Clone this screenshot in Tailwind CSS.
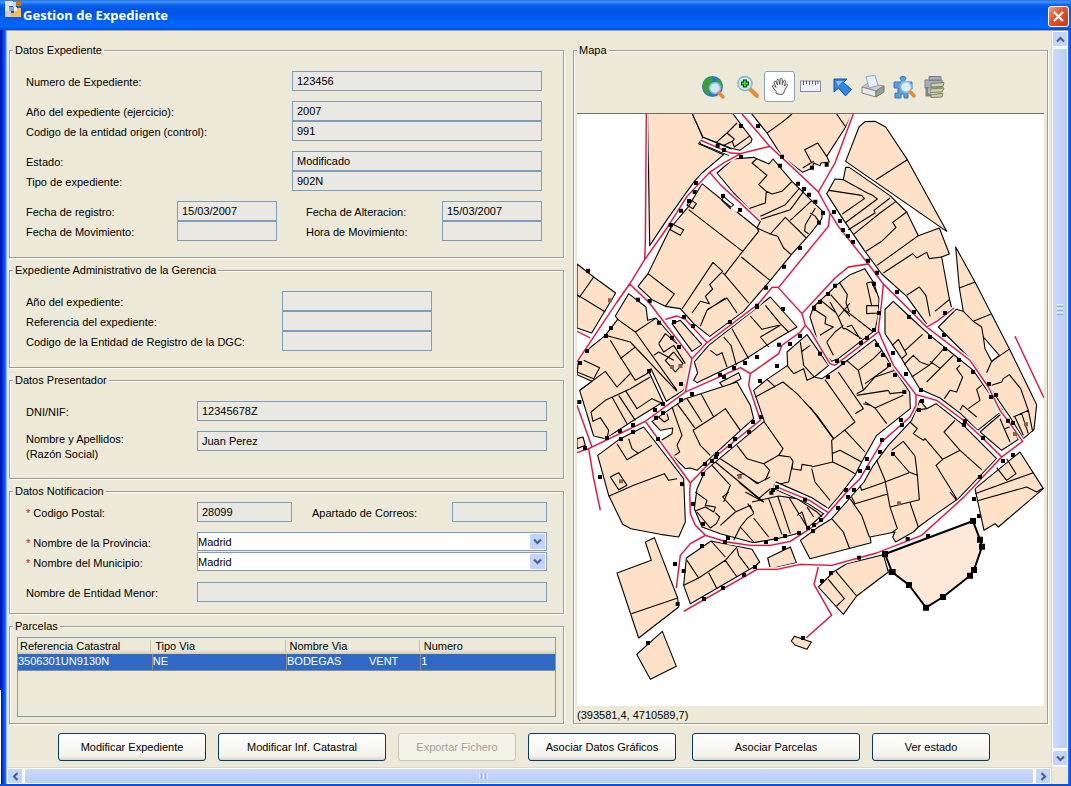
<!DOCTYPE html>
<html lang="es">
<head>
<meta charset="utf-8">
<title>Gestion de Expediente</title>
<script src="https://cdn.jsdelivr.net/npm/@tailwindcss/browser@4"></script>
</head>
<body class="bg-[#ece9d8] font-['Liberation_Sans',Arial,sans-serif] text-[11px] leading-[14px] text-black">
<div class="flex min-h-screen flex-col">
  <header class="flex h-[30px] shrink-0 items-start justify-between bg-[linear-gradient(#2f6fd8_0,#3b93ff_2px,#0a62ee_5px,#0054e3_9px,#0055e6_14px,#0062fb_22px,#0066ff_27px,#0048d0_30px)] pr-[2px] pl-[5px]">
    <div class="flex items-start gap-[2px]">
      <svg class="h-[17px] w-[16px]" viewBox="0 0 16 17" aria-hidden="true"><path fill="#dfe4ee" d="M0 1h8v5H4v5H0z"/><path fill="#8fa3c4" d="M4 7h5v4H4z"/><path fill="#c9d3e6" d="M8 2h3v5H8zM0 11h6v6H0z"/><path fill="#b97a1c" d="M11 1h5v5h-5z"/><path fill="#f8bd57" d="M9 8h7v9H5v-4h4z"/><path fill="#e9edf5" d="M9 7h3v4H9z"/></svg>
      <h1 class="pt-[7px] font-['Noto_Sans',sans-serif] text-[13px] leading-[17px] font-bold text-white">Gestion de Expediente</h1>
    </div>
    <button aria-label="Cerrar" class="mt-[6px] flex size-[21px] items-center justify-center rounded-[3px] border border-white bg-[linear-gradient(135deg,#f0a088,#e0532c_45%,#c63a12)]"><svg class="size-[13px]" viewBox="0 0 13 13"><path d="M2 2l9 9M11 2l-9 9" stroke="#fff" stroke-width="2.2"/></svg></button>
  </header>

  <div class="flex flex-1">
    <div class="relative w-[7px] shrink-0 bg-[linear-gradient(90deg,#0014b4_0,#0018c4_2px,#0046e0_3px,#0a5cf4_5px,#3f86f0_6px,#d8e4f4_7px)]"><span class="absolute bottom-0 left-0 h-[94px] w-px bg-white"></span></div>
    <div class="flex flex-1 flex-col border-t border-[#aca899]">
      <main class="flex flex-1 flex-col pt-[13px] pr-[3px] pb-[6px] pl-[2px]">
        <div class="grid flex-1 grid-cols-[555fr_475fr] gap-[9px]">
          <form class="flex flex-col gap-[6px]">
            <fieldset class="border border-[#9d9d8f] px-4 pt-[15px] pb-4 shadow-[1px_1px_0_#fff,inset_1px_1px_0_#fff]">
              <legend class="ml-[-13px] bg-[#ece9d8] px-[2px] leading-3">Datos Expediente</legend>
              <div class="flex flex-col gap-[10px] pr-[5px]">
                <div class="flex items-center"><label for="num" class="flex-1 pt-px">Numero de Expediente:</label><input id="num" value="123456" readonly class="h-5 w-[250px] border border-[#7f9db9] bg-[#e9e8e2] px-1"></div>
                <div>
                  <div class="flex items-center"><label for="anio" class="flex-1 pt-px">Año del expediente (ejercicio):</label><input id="anio" value="2007" readonly class="h-5 w-[250px] border border-[#7f9db9] bg-[#e9e8e2] px-1"></div>
                  <div class="flex items-center"><label for="ent" class="flex-1 pt-px">Codigo de la entidad origen (control):</label><input id="ent" value="991" readonly class="h-5 w-[250px] border border-[#7f9db9] bg-[#e9e8e2] px-1"></div>
                </div>
                <div>
                  <div class="flex items-center"><label for="est" class="flex-1 pt-px">Estado:</label><input id="est" value="Modificado" readonly class="h-5 w-[250px] border border-[#7f9db9] bg-[#e9e8e2] px-1"></div>
                  <div class="flex items-center"><label for="tipo" class="flex-1 pt-px">Tipo de expediente:</label><input id="tipo" value="902N" readonly class="h-5 w-[250px] border border-[#7f9db9] bg-[#e9e8e2] px-1"></div>
                </div>
                <div>
                  <div class="flex items-center"><label for="freg" class="flex-1 pt-px">Fecha de registro:</label><input id="freg" value="15/03/2007" readonly class="h-5 w-[100px] border border-[#7f9db9] bg-[#e9e8e2] px-1"><label for="falt" class="ml-[29px] w-[136px] pt-px">Fecha de Alteracion:</label><input id="falt" value="15/03/2007" readonly class="h-5 w-[100px] border border-[#7f9db9] bg-[#e9e8e2] px-1"></div>
                  <div class="flex items-center"><label for="fmov" class="flex-1 pt-px">Fecha de Movimiento:</label><input id="fmov" readonly class="h-5 w-[100px] border border-[#7f9db9] bg-[#e9e8e2] px-1"><label for="hmov" class="ml-[29px] w-[136px] pt-px">Hora de Movimiento:</label><input id="hmov" readonly class="h-5 w-[100px] border border-[#7f9db9] bg-[#e9e8e2] px-1"></div>
                </div>
              </div>
            </fieldset>

            <fieldset class="border border-[#9d9d8f] px-4 pt-[15px] pb-4 shadow-[1px_1px_0_#fff,inset_1px_1px_0_#fff]">
              <legend class="ml-[-13px] bg-[#ece9d8] px-[2px] leading-3">Expediente Administrativo de la Gerencia</legend>
              <div class="flex items-center"><label for="ga" class="w-[256px] pt-px">Año del expediente:</label><input id="ga" readonly class="h-5 w-[150px] border border-[#7f9db9] bg-[#e9e8e2] px-1"></div>
              <div class="flex items-center"><label for="gr" class="w-[256px] pt-px">Referencia del expediente:</label><input id="gr" readonly class="h-5 w-[150px] border border-[#7f9db9] bg-[#e9e8e2] px-1"></div>
              <div class="flex items-center"><label for="gc" class="w-[256px] pt-px">Codigo de la Entidad de Registro de la DGC:</label><input id="gc" readonly class="h-5 w-[150px] border border-[#7f9db9] bg-[#e9e8e2] px-1"></div>
            </fieldset>

            <fieldset class="border border-[#9d9d8f] px-4 pt-[15px] pb-[27px] shadow-[1px_1px_0_#fff,inset_1px_1px_0_#fff]">
              <legend class="ml-[-13px] bg-[#ece9d8] px-[2px] leading-3">Datos Presentador</legend>
              <div class="flex flex-col gap-[10px]">
                <div class="flex items-center"><label for="dni" class="w-[171px] pt-px">DNI/NIF:</label><input id="dni" value="12345678Z" readonly class="h-5 flex-1 border border-[#7f9db9] bg-[#e9e8e2] px-1"></div>
                <div class="flex h-5 items-start"><label for="nom" class="w-[171px] pt-px leading-[15px]">Nombre y Apellidos:<br>(Razón Social)</label><input id="nom" value="Juan Perez" readonly class="h-5 flex-1 border border-[#7f9db9] bg-[#e9e8e2] px-1"></div>
              </div>
            </fieldset>

            <fieldset class="border border-[#9d9d8f] px-4 pt-[5px] pb-[11px] shadow-[1px_1px_0_#fff,inset_1px_1px_0_#fff]">
              <legend class="ml-[-13px] bg-[#ece9d8] px-[2px] leading-3">Datos Notificacion</legend>
              <div class="flex flex-col gap-[10px]">
                <div class="flex items-center"><label for="cp" class="w-[171px] pt-px"><span class="text-red-600">*</span> Codigo Postal:</label><input id="cp" value="28099" readonly class="h-5 w-[95px] border border-[#7f9db9] bg-[#e9e8e2] px-1"><label for="ap" class="ml-5 flex-1 pt-px">Apartado de Correos:</label><input id="ap" readonly class="h-5 w-[95px] border border-[#7f9db9] bg-[#e9e8e2] px-1"></div>
                <div class="flex flex-col gap-px pb-px">
                  <div class="flex items-center"><label for="prov" class="w-[171px] pt-[3px]"><span class="text-red-600">*</span> Nombre de la Provincia:</label>
                    <div class="relative flex flex-1"><select id="prov" class="h-[19px] w-full appearance-none border border-[#7f9db9] bg-white"><option>Madrid</option></select><svg class="pointer-events-none absolute top-[2px] right-[2px] size-[15px]" viewBox="0 0 15 15"><rect width="15" height="15" rx="1" fill="#c1d3fb"/><path d="M4 5.500l3.500 3.500L11 5.500" fill="none" stroke="#4d6185" stroke-width="2.200"/></svg></div></div>
                  <div class="flex items-center"><label for="mun" class="w-[171px] pt-[3px]"><span class="text-red-600">*</span> Nombre del Municipio:</label>
                    <div class="relative flex flex-1"><select id="mun" class="h-[19px] w-full appearance-none border border-[#7f9db9] bg-white"><option>Madrid</option></select><svg class="pointer-events-none absolute top-[2px] right-[2px] size-[15px]" viewBox="0 0 15 15"><rect width="15" height="15" rx="1" fill="#c1d3fb"/><path d="M4 5.500l3.500 3.500L11 5.500" fill="none" stroke="#4d6185" stroke-width="2.200"/></svg></div></div>
                </div>
                <div class="flex items-center"><label for="em" class="w-[171px] pt-px">Nombre de Entidad Menor:</label><input id="em" readonly class="h-5 flex-1 border border-[#7f9db9] bg-[#e9e8e2] px-1"></div>
              </div>
            </fieldset>

            <fieldset class="border border-[#9d9d8f] px-[7px] pt-[5px] pb-[6px] shadow-[1px_1px_0_#fff,inset_1px_1px_0_#fff]">
              <legend class="ml-[-4px] bg-[#ece9d8] px-[2px] leading-3">Parcelas</legend>
              <div class="min-h-[80px] border border-[#7f9db9]">
                <table class="w-full table-fixed border-collapse text-left">
                  <thead><tr class="h-4 bg-[linear-gradient(#ece9d8_75%,#d0ccb8)] [&>th]:p-0 [&>th]:pt-px [&>th]:pl-[2px] [&>th]:leading-[15px] [&>th]:font-normal">
                    <th>Referencia Catastral</th><th><span class="-ml-1 border-l border-[#c5c2b0] pl-1">Tipo Via</span></th><th><span class="-ml-1 border-l border-[#c5c2b0] pl-1">Nombre Via</span></th><th><span class="-ml-1 border-l border-[#c5c2b0] pl-1">Numero</span></th></tr></thead>
                  <tbody><tr class="h-4 border-b border-[#8a8a8a] bg-[#316ac5] text-white [&>td]:p-0 [&>td]:leading-[15px]"><td>3506301UN9130N</td><td class="border-l border-[#8a8a8a]">NE</td><td class="border-l border-[#8a8a8a]"><span class="inline-block w-[82px]">BODEGAS</span>VENT</td><td class="border-l border-[#8a8a8a]">1</td></tr></tbody>
                </table>
              </div>
            </fieldset>
          </form>

          <fieldset class="flex flex-col border border-[#9d9d8f] px-[3px] shadow-[1px_1px_0_#fff,inset_1px_1px_0_#fff]">
            <legend class="bg-[#ece9d8] px-[2px] leading-3">Mapa</legend>
            <div class="flex h-[57px] shrink-0 items-start pt-[15px] pl-[120px]">
              <button aria-label="Vista completa" class="flex h-[31px] w-[31px] items-center justify-center"><svg class="size-6" viewBox="0 0 24 24"><circle cx="11.500" cy="11.500" r="10.500" fill="#2b78c8"/><path d="M3 6c3-4 7-5 9-3l-2 4 3 3-4 3-1 7C3 18 0 12 3 6zM16 3c4 2 6 6 6 10l-4-3-3-2z" fill="#35a03c"/><circle cx="14" cy="13" r="5.500" fill="#cfe8f6" stroke="#8fb6cf" stroke-width="1.500"/><path d="M18 18l4 4" stroke="#f08a30" stroke-width="3.500" stroke-linecap="round"/></svg></button>
              <button aria-label="Acercar" class="mr-px ml-1 flex h-[31px] w-[31px] items-center justify-center"><svg class="size-6" viewBox="0 0 24 24"><path d="M14 14l7 7" stroke="#f08a30" stroke-width="4" stroke-linecap="round"/><circle cx="9" cy="8.500" r="7" fill="#d5ecf5" stroke="#8fb1c3" stroke-width="1.500"/><path d="M9 4.500v8M5 8.500h8" stroke="#063c08" stroke-width="4"/><path d="M9 5.500v6M6 8.500h6" stroke="#39d836" stroke-width="2"/></svg></button>
              <button aria-label="Desplazar" class="flex h-[31px] w-[31px] items-center justify-center rounded-[3px] border border-[#8aa3b8] bg-white"><svg class="size-5" viewBox="0 0 20 20"><path d="M6 16v-1.500L2.500 10c-1-1.500 1-2.500 2-1L6 10.500l-2-5c-.3-1.500 1.700-2 2-.5L7.500 8 6.700 3.500c0-1.500 2-1.500 2.200 0L9.800 7.500l.3-5c0-1.500 2-1.500 2.200 0v5l1.200-3.500c.5-1.300 2.300-.8 2 .5l-1 4.500 1.300-1.500c1-1 2.200 0 1.500 1.200L14.500 13.500l-1 3c-2 1.500-5 1.300-7.500-.5z" fill="#f4f4f4" stroke="#555" stroke-width="1"/></svg></button>
              <button aria-label="Medir" class="flex h-[31px] w-[31px] items-center justify-center"><svg class="h-[14px] w-[21px]" viewBox="0 0 21 14"><rect x=".5" y="1" width="20" height="10.500" fill="#eef0f8" stroke="#8888a0"/><path d="M3.500 1v4M6.500 1v3M9.500 1v4M12.500 1v3M15.500 1v4M18 1v3" stroke="#666"/></svg></button>
              <button aria-label="Seleccionar" class="ml-px flex h-[31px] w-[31px] items-center justify-center"><svg class="size-5" viewBox="0 0 20 20"><path d="M1 2h13l-3.500 3.500 8 7-6 6.500-7-8L1 15z" fill="#2f86e4" stroke="#1c4fa0"/><path d="M3 4h7L5 9z" fill="#8cc4fa"/></svg></button>
              <button aria-label="Imprimir" class="-ml-px flex h-[31px] w-[31px] items-center justify-center"><svg class="size-6" viewBox="0 0 24 24"><path d="M1 12l6-4 16 3-8 5z" fill="#c9cbc8" stroke="#999"/><path d="M5 1.500l9-1 3 10-9 2.500z" fill="#e4f0fc" stroke="#8ea4bc"/><path d="M1 12l14 4v6L1 18z" fill="#e8e9e6" stroke="#888"/><path d="M15 16l8-5v6l-8 5z" fill="#9b9e9a" stroke="#777"/><path d="M17 18.500l4-2" stroke="#5ac35e" stroke-width="1.500"/></svg></button>
              <button aria-label="Consultar parcela" class="flex h-[31px] w-[31px] items-center justify-center"><svg class="size-6" viewBox="0 0 24 24"><path d="M2 7h7c1-2-1-3-1-4 0-2 6-2 6 0 0 1-2 2-1 4h7v7h-4v9h-4v-4h-3v4H3v-5h3v-5H2z" fill="#5b9de0" stroke="#3a78bd"/><circle cx="14" cy="12" r="5.500" fill="#d8edf8" stroke="#8fb6cf" stroke-width="1.500"/><path d="M18.500 17l3.500 4" stroke="#f08a30" stroke-width="3.500" stroke-linecap="round"/></svg></button>
              <button aria-label="Capas" class="flex h-[31px] w-[31px] items-center justify-center"><svg class="size-6" viewBox="0 0 24 24"><path d="M6 1.500h12v4H6zM2 5h17v8H2z" fill="#a9adb8" stroke="#7c818c"/><path d="M4 12v8h4" fill="none" stroke="#7c818c" stroke-width="3"/><path d="M8 8.500l13-1-1 4-12 .5zM7 14l14-1-2 4-12 .5zM8 19.500l12-1-1 3.500-11 .5z" fill="#cfd2a8" stroke="#77805c"/></svg></button>
            </div>
            <div class="flex-1 border-t border-[#6e6e62] bg-white">
              <svg class="block aspect-[467/591] w-full" viewBox="0 0 1401 1773" role="img" aria-label="Plano parcelario">
                <g fill="#fee1c6" stroke="#000" stroke-width="3.300" stroke-linejoin="round">
                  <!-- manzanas, noroeste -->
                  <g transform="translate(0 -3)">
                    <path d="M212 0L218 398 270 320 352 205 375 180 440 125 365 92 378 75 345 0Z"/>
                    <path d="M345 0L378 73 418 88 460 105 488 112 522 88 525 78 466 0Z"/>
                    <path d="M522 0L570 60 615 130 677 178 706 165 710 150 729 158 732 150 757 147 749 130 806 42 827 0Z"/>
                    <path d="M420 180L468 138 530 133 576 153 588 138 645 205 737 295 734 318 700 362 643 425 580 502 500 595 398 670 350 632 310 587 265 580 225 560 183 520 213 482 280 345 335 280 375 212 465 285 540 345 550 325 515 287 470 240Z"/>
                    <path d="M0 453L50 492 116 540 44 660 0 645Z"/>
                    <path fill="none" d="M418 88L450 60 480 30M450 60L472 78 466 85 435 100M466 85L472 102 520 68M570 60L615 28 645 3M749 130L722 90 683 110 704 150M677 165L710 145M779 3L806 42M335 290L497 415 545 355 540 345M493 432L580 503M497 415L443 485 515 570M213 482L292 543 265 580M315 588L408 448 437 475 398 515 407 528 385 550 397 572 370 565 345 600M437 480L443 485M390 590L450 555 480 600M370 640L390 592 445 555M540 345L580 363 625 313 688 375M580 363L602 370 620 405 643 425M550 310L625 275 668 225M548 320L640 290 680 235M515 287L565 270 568 235 545 215 570 187 525 150 540 137M568 235L585 243 615 235 645 205M640 322L705 262M715 285L685 335 683 355 695 362M700 300L715 310 725 325M50 492L8 552 0 545M0 545L85 597M460 268L470 275 460 287 435 262 440 250ZM340 260L358 272 348 287 330 277ZM285 332L320 350 310 367 280 350Z"/>
                    <path fill="#fff" d="M460 285L478 272 485 290 478 298Z" stroke="none"/>
                  </g>
                  <!-- manzanas, noreste -->
                  <g transform="translate(699 -3)">
                    <path d="M107 145L147 42 165 26 195 25 227 42 292 140 410 355Z"/>
                    <path d="M107 163L118 163 240 248 290 297 325 368 388 345 418 423 395 432 418 557 425 585 355 640 290 550 215 483 165 415 100 320 50 242 75 198 100 200Z"/>
                    <path d="M164 467L120 485 85 512 10 582 0 612 30 707 65 745 85 737 195 652 205 607 207 557 190 507Z"/>
                    <path fill="none" d="M198 200L292 140M57 232L155 247 163 257 97 303M100 200L172 240 188 247 202 258 105 330M240 255L192 292 195 300 115 350M258 265L210 300 130 365M290 297L248 328 258 343 215 385 168 415M325 368L200 458M395 432L358 437 350 418 320 435 308 422 220 480M290 547L328 522 348 548 360 610M375 595L418 560M88 508L112 545 108 570 118 597M170 510L185 507 200 540M170 510L185 578M170 578H207V600L170 602ZM62 545L120 610M30 560L75 597M10 587L48 612 45 632 70 642 30 667M60 567L85 612 120 570M85 612L100 647 108 647 155 677M100 587L190 657M50 687L75 657 100 637M50 687L70 727M110 642L125 637 150 677"/>
                  </g>
                  <!-- manzanas, oeste y centro -->
                  <g transform="translate(0 564)">
                    <path d="M115 42L155 -25 207 15 212 55 237 48 345 172 320 265 268 298 222 200 216 210 258 300 170 355 85 410 50 402 8 265 45 238 0 218 5 165 85 100 122 52Z"/>
                    <path d="M285 65L310 55 375 128 345 148Z"/>
                    <path d="M0 410L18 405 25 430 0 440Z"/>
                    <path d="M352 180L395 130 580 -15 660 75 600 110 500 175 360 242 350 235 362 212Z"/>
                    <path d="M428 242L485 212 492 230 440 258Z"/>
                    <path d="M225 358L325 290 480 240 520 310 530 350 480 395 360 505 340 498 325 500 245 420 285 395 287 378 250 385Z"/>
                    <path d="M62 460L130 410 200 375 235 420 320 530 325 660 305 705 250 697 162 680 137 667 95 580Z"/>
                    <path d="M530 265L570 232 632 190 630 150 690 98 755 190 712 225 735 230 785 195 893 112 950 200 998 270 1000 320 899 400 854 480 834 520 784 585 745 630 680 690 600 710 530 722 430 695 375 675 352 620 360 560 385 505 562 358Z"/>
                    <path fill="none" d="M122 52L175 90 300 265M85 100L160 120 300 268M175 90L235 50M100 115L130 165 175 235M130 170L175 135M160 215L120 255 85 208 8 265M20 175L68 197 50 230 0 210M175 235L215 212M42 330L85 295 160 260 220 225M145 265L180 320 225 290 258 305M125 280L175 355M105 285L150 365M42 330L48 358 70 347 95 385 90 410M230 160L245 150 290 175M245 125L265 95 300 125M245 125L260 150 290 130 325 185M265 175L290 150 318 185 295 210ZM400 145L420 160 435 152 450 195M440 105L462 130 478 190M465 80L515 170M520 42L555 82 605 70M550 105L575 135M550 105L610 70M565 10L610 65 635 90M245 345L262 360 275 352 270 335M285 315L315 400 300 430 308 450 293 460M300 305L355 380M330 290L375 360M372 275L410 345 445 320 490 385M348 385L410 345M348 385L370 430 400 460M95 583L170 550 262 515 275 535 300 530M120 425L150 473 225 430M155 410L165 440 185 455M100 525L125 512 150 550 125 563ZM535 285L618 240 660 275 720 340 770 410M562 360L618 440 605 460 640 465 648 478 635 540 590 550M480 430L510 470 560 485 578 505 565 535M605 460L560 485M648 478L645 500 672 505 675 487 705 492M430 470L545 545M415 480L560 600M405 490L460 550 440 600M480 520L500 515 540 545 580 525M485 540L545 590 580 560M630 190L650 215 680 200 690 235 712 225M570 232L595 255M672 150L700 130M670 120L680 190 712 225"/>
                  </g>
                  <!-- manzanas, este -->
                  <g transform="translate(699 564)">
                    <path d="M437 -165L495 -60 598 140 680 308 672 383 640 410 600 345 545 265 490 180 385 75 438 22 460 28 448 -42Z"/>
                    <path fill="#fff" d="M520 105L568 160 545 178 525 140Z"/>
                    <path d="M225 22L250 -2 300 45 360 100 440 165 490 205 535 270 578 325 503 385 452 335 390 288 330 262 275 170 225 95Z"/>
                    <path d="M510 390L580 330 595 355 625 412 575 445Z"/>
                    <path d="M330 295L350 320 378 305 455 365 560 470 445 590 380 635 325 675 310 690 257 720 248 705 255 690 180 705 183 722 0 770 -29 715 25 675 65 650 125 582 162 540 190 490 235 430 305 355Z"/>
                    <path d="M495 560L630 450 700 560 565 675 555 665 522 685Z"/>
                    <path fill="none" d="M448 -42L495 -60M490 58L542 37M460 28L490 58 515 75 520 105M545 178L600 140M530 212L545 178M545 250L575 240 580 230 598 218 632 260 655 325 668 388M610 345L655 325M635 335L655 395M615 345L640 400M247 130L265 112 290 157 275 170M285 145L338 97M282 188L310 160 330 180 357 190 403 138M360 178L392 200M305 225L357 190M350 240L430 160M403 290L420 265 440 270 458 225 440 200 450 190M450 325L458 310 500 345M475 320L510 295 500 262 515 250M570 350L600 420M585 380L610 370M315 325L350 320M300 360L322 380 310 395 340 415 345 410 398 472 378 490 440 590M398 472L450 445 515 503M450 445L402 390 435 355M245 445L280 418 315 462 322 520 297 510 245 450M200 475L225 535 240 615M322 520L328 593 240 615M150 550L155 565 225 540 297 512M125 585L135 605 235 575M120 590L155 640 178 705M240 615L262 680 248 690M300 602L325 675M65 650L100 690 118 738M420 570L440 595M560 497L590 535 618 515 590 470M495 575L670 512M500 597L650 555 680 570 700 558M45 233L135 360 65 415 68 480 5 495M85 210L160 320 135 335M110 175L145 205 160 265 195 225 255 205M145 205L190 170 215 145M160 265L140 275M165 245L235 195M140 280L235 265 240 275 285 270M165 300L195 318 280 280M195 318L230 365M160 305L180 310M105 385L165 450M65 455L90 445 155 480M68 480L110 500 135 515M5 500L15 540 60 595M0 315L70 410"/>
                  </g>
                  <!-- manzanas, sur -->
                  <g transform="translate(0 1134)">
                    <path d="M205 150L232 137 302 318 305 345 185 438 120 243 223 205Z"/>
                    <path d="M179 487L256 418 298 523 220 562Z"/>
                    <path d="M652 433L703 450 690 472 655 460 643 447Z"/>
                    <path d="M572 198L640 165 658 212 580 230Z"/>
                    <path d="M328 198L402 147 525 172 548 210 535 222 340 335 320 280Z"/>
                    <path d="M724 285L769 240 809 215 919 188 934 240 839 312 799 367Z"/>
                    <path fill="none" d="M163 365L302 318M330 205L365 258M320 280L365 258 445 205 480 165M402 147L445 195M395 242L420 290M445 205L480 255M480 170L485 190 515 230M777 238L839 312M754 262L802 320 779 342M355 0L390 25 385 40 415 45 410 60 385 45 355 57M415 62L428 75 418 95 400 108 360 60M430 100L475 60 520 40 530 65 510 80 490 105 530 150M490 105L470 145M530 78L575 135M575 20L615 128M602 12L640 125M635 15L690 105M475 57L437 15 455 0M505 0L560 30M525 30L605 12 660 20 720 60 735 75M660 70L675 60 690 105M690 45L710 75M512 35L530 60"/>
                    <path fill="#fee9d9" stroke-width="6" d="M924 186L1188 87 1209 143 1215 164 1191 234 1179 251 1098 315 1047 347 996 279 945 240Z"/>
                  </g>
                  <!-- callejones sin salida -->
                  <path fill="none" stroke="#000" stroke-width="24" d="M592 1113L699 1160 745 1190M372 79L460 115"/>
                  <path fill="none" stroke="#fff" stroke-width="18" d="M592 1114L699 1160 754 1196M375 80L470 119"/>
                </g>
                <!-- ejes de vial -->
                <defs><g id="viales">
                  <path d="M208 0L205 387 203 437M495 0L578 97 675 187 724 234 759 297 784 337 874 450 919 510 974 564 1049 639 1179 739 1234 819 1269 889 1299 929 1337 982 1274 1029 1219 974 1159 919 1079 859 1017 842 949 754 914 674 904 649 914 564 919 510M578 97L490 119 440 147 398 175 330 247 270 342 203 437 158 510 120 564 0 744M398 175L430 212 490 267 548 322M372 79L460 117 490 119M158 510L215 564 345 734 325 834M759 297L754 337 605 520 585 520 545 569 390 686 345 734M265 616L300 606 325 616 390 686M603 520L675 599 685 634 699 649 759 749 774 754 904 654M675 599L774 492 814 459 874 450M685 634L670 654 615 694 605 719 520 779 490 761 325 834 205 922 35 1004 0 1016M520 779L515 814 550 919 420 1024 340 1107 205 922M340 1107L338 1134 340 1199 355 1234 385 1264 450 1284 520 1294 580 1294 640 1282 699 1244 739 1214 809 1134 849 1094 914 984 999 909 1017 874 1017 842M0 874L45 999M35 1004L50 1094 70 1189M0 652L40 672M385 1264L340 1289 310 1324 298 1422M320 1492L540 1366 600 1366 670 1351 764 1354 899 1317 1034 1264 1160 1150 1274 1029M724 1359L711 1411 764 1504 688 1571M1049 639L1084 619 1131 582M1314 667L1401 852M829 0L774 147 724 234M600 1119L699 1160 754 1196"/>
                </g></defs>
                <g fill="none" stroke-linejoin="round"><use href="#viales" stroke="#fff" stroke-width="13"/><use href="#viales" stroke="#fbe3ea" stroke-width="8"/><use href="#viales" stroke="#cf1c40" stroke-width="4"/></g>
                <!-- portales -->
                <g fill="none" stroke="#000" stroke-width="12" stroke-linecap="square">
                  <path transform="translate(0 -3)" d="M492 39h0M543 39h0M422 98h0M441 111h0M492 131h0M615 131h0M609 158h0M705 164h0M749 155h0M663 212h0M681 228h0M696 245h0M715 266h0M357 210h0M353 237h0M336 264h0M312 293h0M281 336h0M438 249h0M489 291h0M669 405h0M621 461h0M567 524h0M540 578h0M618 588h0M33 473h0M183 560h0M218 564h0M738 300h0M726 329h0M771 297h0M789 324h0M798 351h0M813 369h0M828 387h0M873 443h0M900 479h0M891 512h0M960 537h0M774 518h0M753 543h0M729 567h0M711 584h0"/>
                  <path transform="translate(0 564)" d="M102 78h0M87 102h0M30 147h0M9 183h0M246 62h0M291 60h0M321 45h0M348 72h0M285 107h0M306 135h0M216 207h0M312 246h0M459 60h0M540 15h0M606 128h0M639 126h0M669 102h0M540 165h0M504 183h0M471 198h0M429 218h0M441 225h0M600 192h0M549 237h0M345 276h0M312 294h0M258 306h0M234 324h0M258 333h0M237 347h0M168 369h0M168 390h0M129 387h0M132 411h0M90 408h0M24 438h0M7 300h0M243 411h0M528 360h0M552 345h0M516 390h0M474 411h0M459 432h0M420 456h0M417 465h0M405 477h0M384 486h0M378 516h0M315 546h0M69 525h0M588 564h0M600 556h0M583 572h0M684 593h0M711 20h0"/>
                  <path transform="translate(699 564)" d="M312 30h0M297 45h0M207 33h0M405 33h0M402 99h0M360 105h0M405 141h0M447 174h0M489 210h0M537 246h0M558 279h0M543 285h0M594 356h0M609 363h0M192 84h0M171 108h0M153 123h0M81 177h0M99 183h0M30 155h0M54 225h0M201 129h0M219 159h0M249 153h0M237 189h0M255 219h0M288 216h0M283 270h0M333 264h0M336 297h0M327 324h0M273 354h0M276 369h0M216 414h0M210 450h0M249 456h0M171 471h0M174 498h0M150 507h0M108 564h0M132 564h0M114 585h0M465 357h0M462 368h0M519 408h0M609 459h0M579 477h0M510 525h0M492 591h0"/>
                  <path transform="translate(0 1134)" d="M348 36h0M378 96h0M453 138h0M444 150h0M375 162h0M294 216h0M320 237h0M381 321h0M438 288h0M501 249h0M534 225h0M567 150h0M597 141h0M624 132h0M666 123h0M693 107h0M711 99h0M708 117h0M621 168h0M732 84h0M783 48h0M992 141h0M1053 132h0M846 197h0M762 243h0M735 267h0M1206 72h0M213 453h0M678 438h0M302 336h0"/>
                </g>
                <path transform="translate(0 1134)" fill="none" stroke="#000" stroke-width="18" stroke-linecap="butt" d="M915 186h18M1179 87h18M1200 143h18M1206 164h18M1182 234h18M1170 251h18M1089 315h18M1038 347h18M987 279h18M935 240h21"/>
                <g fill="#8a6248"><path d="M93 553h12v12H93zM279 753h12v12h-12zM304 750h12v12h-12zM126 1096h12v12h-12zM482 1082h12v12h-12zM1341 925h12v12h-12zM1308 954h12v12h-12zM960 1162h12v12h-12z"/></g>
              </svg>
            </div>
            <p class="h-[17px] shrink-0 leading-[18px]">(393581,4, 4710589,7)</p>
          </fieldset>
        </div>

        <div class="mt-[9px] flex gap-3 px-[49px]">
          <button class="h-7 w-[148px] rounded-[3px] border border-[#003c74] bg-[linear-gradient(#fff,#f3f2ec_85%,#d8d4c4)]">Modificar Expediente</button>
          <button class="h-7 w-[168px] rounded-[3px] border border-[#003c74] bg-[linear-gradient(#fff,#f3f2ec_85%,#d8d4c4)]">Modificar Inf. Catastral</button>
          <button disabled class="h-7 w-[118px] rounded-[3px] border border-[#c9c7ba] bg-[#f3f2e9] text-[#a1a192]">Exportar Fichero</button>
          <button class="h-7 w-[148px] rounded-[3px] border border-[#003c74] bg-[linear-gradient(#fff,#f3f2ec_85%,#d8d4c4)]">Asociar Datos Gráficos</button>
          <button class="ml-1 h-7 w-[168px] rounded-[3px] border border-[#003c74] bg-[linear-gradient(#fff,#f3f2ec_85%,#d8d4c4)]">Asociar Parcelas</button>
          <button class="h-7 w-[118px] rounded-[3px] border border-[#003c74] bg-[linear-gradient(#fff,#f3f2ec_85%,#d8d4c4)]">Ver estado</button>
        </div>
      </main>
      <div class="flex h-[17px] shrink-0 border-t border-[#d8d8d0] bg-[#f6f5f0]">
        <button aria-label="Izquierda" class="flex h-4 w-4 items-center justify-center rounded-[2px] border border-white bg-[#c3d4fc]"><svg class="size-[9px]" viewBox="0 0 9 9"><path d="M6.500 1L3 4.500 6.500 8" fill="none" stroke="#4d6185" stroke-width="2.200"/></svg></button>
        <div class="mx-px flex h-4 flex-1 items-center justify-center gap-px rounded-[2px] border border-white bg-[linear-gradient(#cbdafe,#b9cdfa)] pr-[92px]"><i class="h-[6px] w-px bg-[#eef4fe]"></i><i class="h-[6px] w-px bg-[#8cb0f8]"></i><i class="h-[6px] w-px bg-[#eef4fe]"></i><i class="h-[6px] w-px bg-[#8cb0f8]"></i><i class="h-[6px] w-px bg-[#eef4fe]"></i></div>
        <button aria-label="Derecha" class="flex h-4 w-4 items-center justify-center rounded-[2px] border border-white bg-[#c3d4fc]"><svg class="size-[9px]" viewBox="0 0 9 9"><path d="M2.500 1L6 4.500 2.500 8" fill="none" stroke="#4d6185" stroke-width="2.200"/></svg></button>
      </div>
    </div>
    <div class="flex w-[17px] shrink-0 flex-col gap-px border-t border-l border-t-[#aca899] border-l-[#d8d8d0] bg-[#f6f5f0]">
      <button aria-label="Arriba" class="flex h-4 w-4 items-center justify-center rounded-[2px] border border-white bg-[#c3d4fc]"><svg class="size-[9px]" viewBox="0 0 9 9"><path d="M1 6.500L4.500 3 8 6.500" fill="none" stroke="#4d6185" stroke-width="2.200"/></svg></button>
      <div class="flex w-4 flex-1 flex-col items-center justify-center gap-px rounded-[2px] border border-white bg-[linear-gradient(90deg,#cbdafe,#b9cdfa)] pb-[178px]"><i class="h-px w-[6px] bg-[#eef4fe]"></i><i class="h-px w-[6px] bg-[#8cb0f8]"></i><i class="h-px w-[6px] bg-[#eef4fe]"></i><i class="h-px w-[6px] bg-[#8cb0f8]"></i><i class="h-px w-[6px] bg-[#eef4fe]"></i><i class="h-px w-[6px] bg-[#8cb0f8]"></i></div>
      <button aria-label="Abajo" class="flex h-4 w-4 items-center justify-center rounded-[2px] border border-white bg-[#c3d4fc]"><svg class="size-[9px]" viewBox="0 0 9 9"><path d="M1 2.500L4.500 6 8 2.500" fill="none" stroke="#4d6185" stroke-width="2.200"/></svg></button>
      <div class="h-[17px] bg-[#ece9d8]"></div>
    </div>
    <div class="w-[3px] shrink-0 bg-[linear-gradient(90deg,#3a78ee,#0040d8)]"></div>
  </div>
  <div class="h-[2px] shrink-0 bg-[#0a4fe0]"></div>
</div>
</body>
</html>
